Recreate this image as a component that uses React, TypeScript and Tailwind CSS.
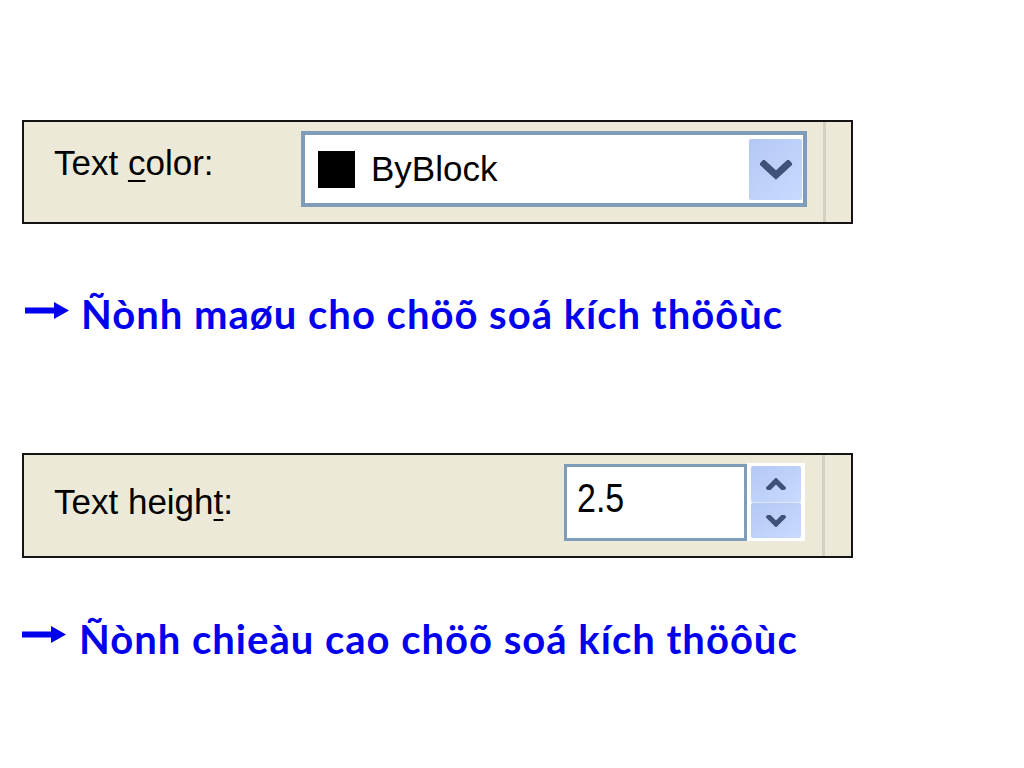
import React from "react";

const label = "font-['Liberation_Sans',Arial,sans-serif] text-[35px] leading-[40px] text-black whitespace-nowrap";
const blue = "font-['Lato','Open_Sans',sans-serif] font-bold text-[40px] leading-[48px] tracking-[1px] text-[#0000ee] whitespace-nowrap";

function Arrow() {
  return (
    <svg width="44" height="17" viewBox="0 0 44 17" className="shrink-0">
      <rect x="0" y="5.5" width="31" height="6" fill="#0000ee" />
      <polygon points="29,0 44,8.5 29,17" fill="#0000ee" />
    </svg>
  );
}

function DownChevron() {
  return (
    <svg width="32" height="20" viewBox="0 0 32 20">
      <polyline points="4,4 16,15 28,4" fill="none" stroke="#3f5079" strokeWidth="7" strokeLinejoin="miter" strokeLinecap="square" />
    </svg>
  );
}

function SmallChevron({ up }: { up?: boolean }) {
  return (
    <svg width="20" height="12" viewBox="0 0 20 12">
      <polyline
        points={up ? "3,10 10,3 17,10" : "3,2 10,9 17,2"}
        fill="none"
        stroke="#3f5079"
        strokeWidth="5"
        strokeLinecap="square"
      />
    </svg>
  );
}

export default function App() {
  return (
    <div className="min-h-[768px] w-[1024px] bg-white pt-[120px] pl-[22px]">
      {/* Panel 1 */}
      <div className="flex h-[104px] w-[831px] border-2 border-[#141414] bg-[#ece9d8]">
        <div className="flex flex-1 items-start">
          <div className={`${label} ml-[30px] mt-[21px] w-[247px]`}>
            Text <span className="underline underline-offset-[5px] decoration-2">c</span>olor:
          </div>
          <div className="mt-[9px] flex h-[76px] w-[506px] items-center border-4 border-[#7f9db9] bg-white">
            <div className="ml-[13px] h-[37px] w-[37px] bg-black" />
            <div className={`${label} ml-[16px] flex-1`}>ByBlock</div>
            <div className="mr-[1px] flex h-[61px] w-[53px] items-center justify-center rounded-[2px] bg-gradient-to-br from-[#b4c8f5] to-[#c8daff] pt-[2px]">
              <DownChevron />
            </div>
          </div>
        </div>
        <div className="w-[3px] bg-[#d4d1c4]" />
        <div className="w-[25px]" />
      </div>

      {/* Line 1 */}
      <div className="mt-[66px] flex items-start">
        <div className="ml-[3px] mt-[12px]">
          <Arrow />
        </div>
        <div className={`${blue} ml-[12px]`}>Ñònh maøu cho chöõ soá kích thöôùc</div>
      </div>

      {/* Panel 2 */}
      <div className="mt-[115px] flex h-[105px] w-[831px] border-2 border-[#141414] bg-[#ece9d8]">
        <div className="flex flex-1 items-start">
          <div className={`${label} ml-[30px] mt-[27px] w-[510px]`}>
            Text heigh<span className="underline underline-offset-[5px] decoration-2">t</span>:
          </div>
          <div className="mt-[9px] h-[77px] w-[183px] border-[3px] border-[#7f9db9] bg-white pl-[10px] pt-[13px]">
            <div className="inline-block origin-[50%_31px] scale-y-[1.2] font-['Liberation_Sans',Arial,sans-serif] text-[34px] leading-[40px] text-black">
              2.5
            </div>
          </div>
          <div className="mt-[8px] flex h-[78px] w-[58px] flex-col bg-white px-[4px] py-[3px]">
            <div className="flex h-[36px] items-center justify-center rounded-[2px] bg-gradient-to-br from-[#b4c8f5] to-[#c8daff]">
              <SmallChevron up />
            </div>
            <div className="h-[1px] bg-[#dfe6f2]" />
            <div className="flex flex-1 items-center justify-center rounded-[2px] bg-gradient-to-br from-[#b4c8f5] to-[#c8daff]">
              <SmallChevron />
            </div>
          </div>
        </div>
        <div className="w-[3px] bg-[#d4d1c4]" />
        <div className="w-[26px]" />
      </div>

      {/* Line 2 */}
      <div className="mt-[57px] flex items-start">
        <div className="mt-[11px]">
          <Arrow />
        </div>
        <div className={`${blue} ml-[13px]`}>Ñònh chieàu cao chöõ soá kích thöôùc</div>
      </div>
    </div>
  );
}
